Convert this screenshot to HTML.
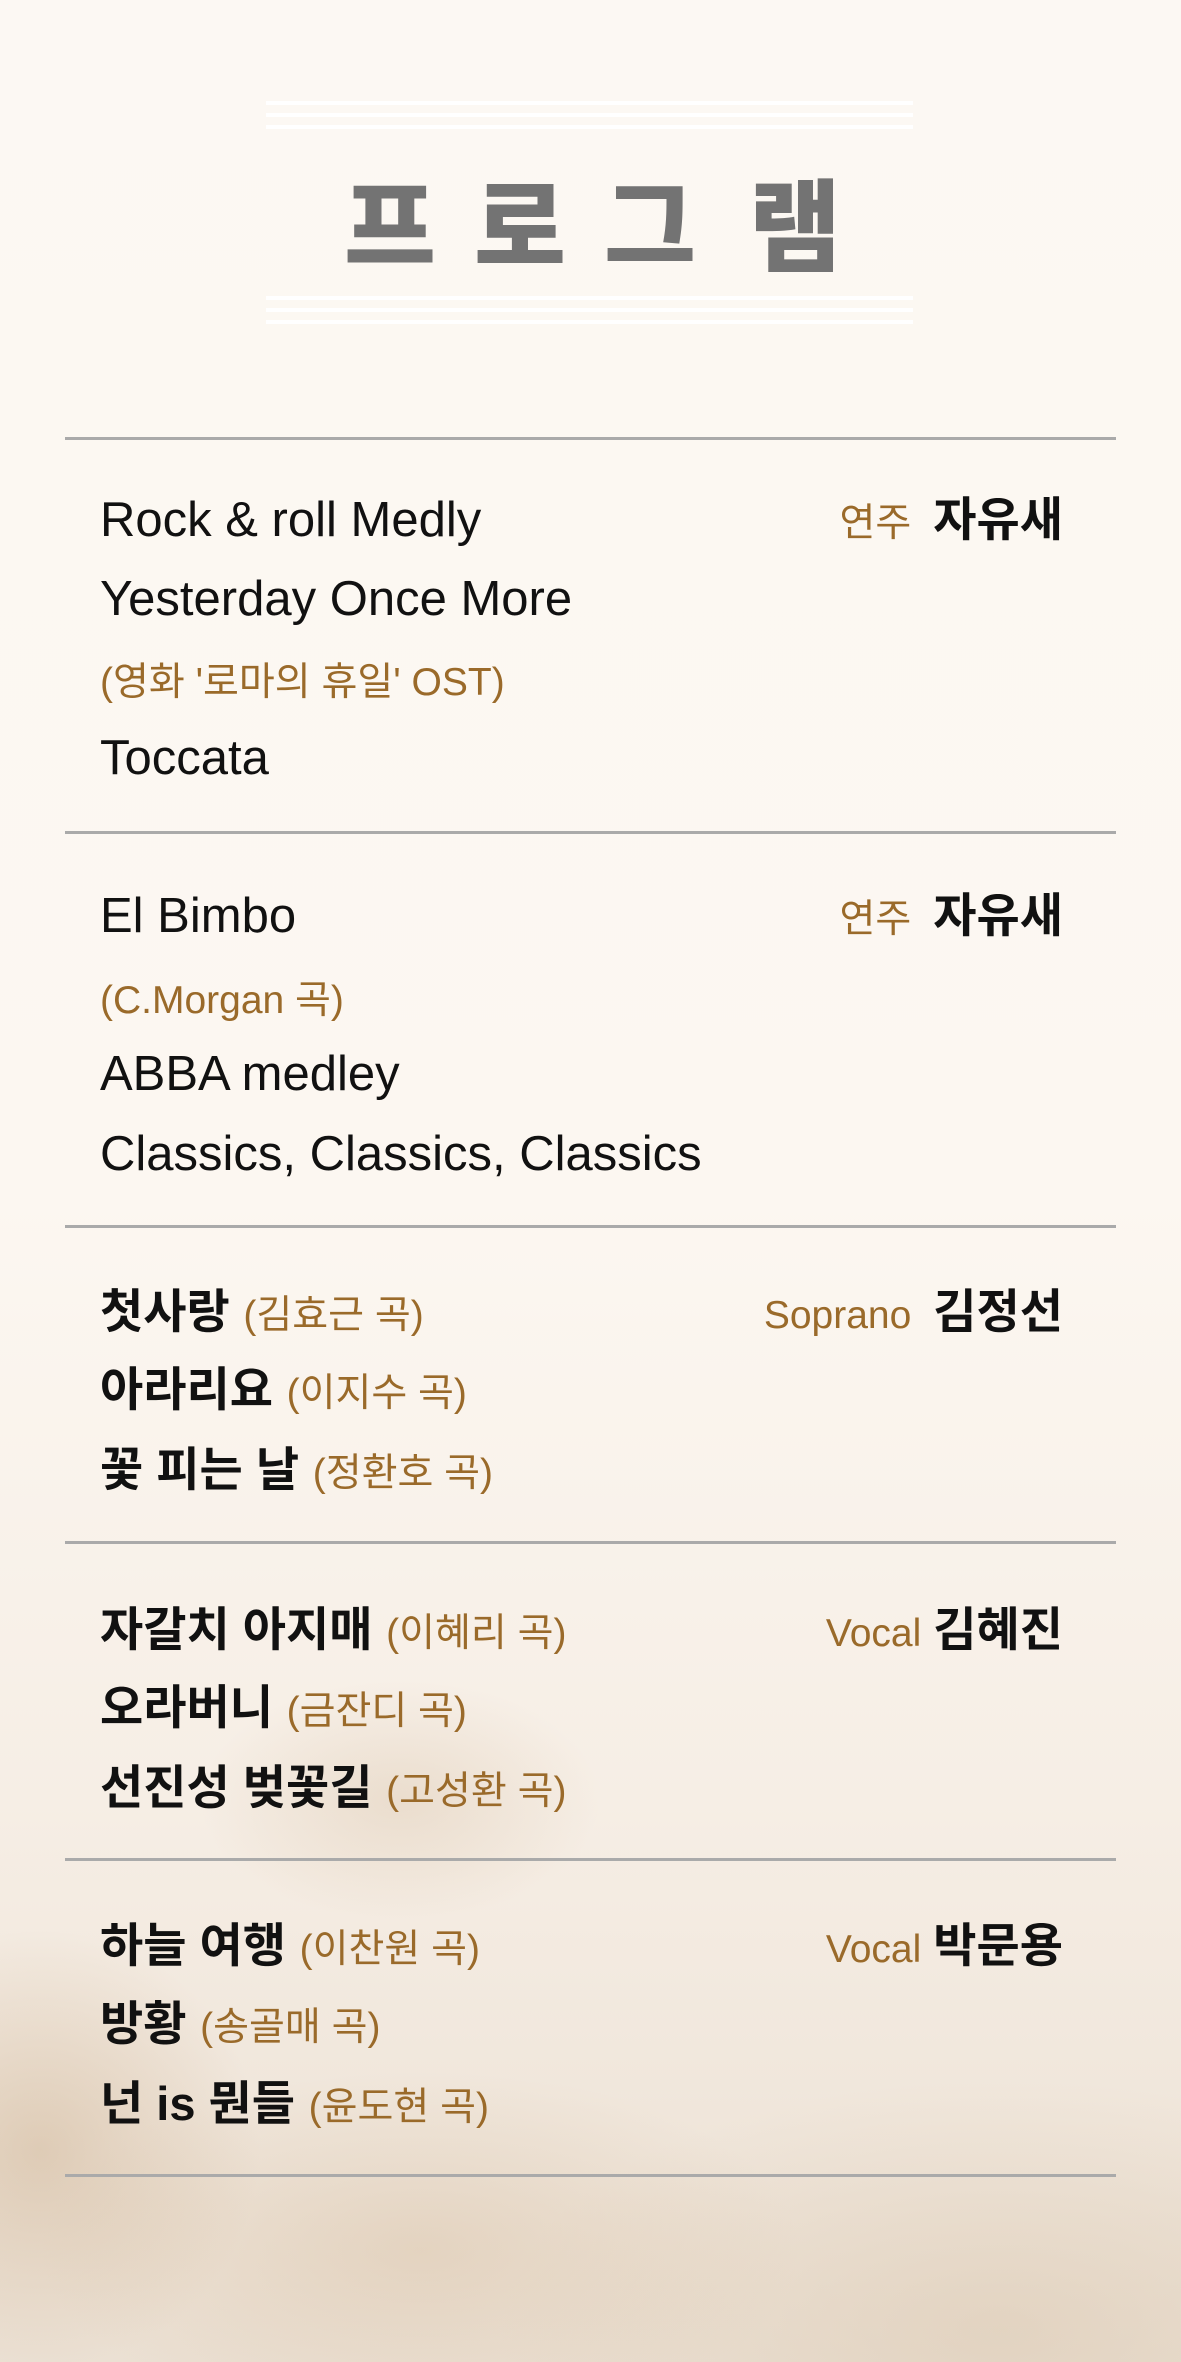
<!DOCTYPE html>
<html><head><meta charset="utf-8"><style>
html,body{margin:0;padding:0}
body{width:1181px;height:2362px;position:relative;overflow:hidden;
background:
radial-gradient(ellipse 200px 120px at 400px 1800px, rgba(200,170,135,.25), rgba(200,170,135,0) 100%),
radial-gradient(ellipse 220px 220px at 40px 2150px, rgba(190,155,115,.35), rgba(190,155,115,0) 100%),
radial-gradient(ellipse 380px 180px at 420px 2250px, rgba(205,175,140,.3), rgba(205,175,140,0) 100%),
radial-gradient(ellipse 500px 250px at 1000px 2330px, rgba(215,195,170,.45), rgba(215,195,170,0) 100%),
linear-gradient(#fcf8f3 0px,#fcf7f1 1200px,#f6eee5 1800px,#ebe0d3 2362px);
font-family:"Liberation Sans","Noto Sans CJK KR",sans-serif;}
.wl{position:absolute;left:266px;width:647px;height:4px;background:#fff}
.ch{position:absolute;top:160px;width:120px;text-align:center;font-family:"Noto Sans CJK KR",sans-serif;font-weight:900;font-size:100px;line-height:120px;color:#737373}
.hr{position:absolute;left:65px;width:1051px;height:3px;background:#aaa}
.t{position:absolute;left:100px;height:60px;line-height:60px;font-size:49px;color:#111;white-space:nowrap}
.k{font-family:"Liberation Sans","Noto Sans CJK KR",sans-serif;font-weight:700;font-size:47px}
.b{color:#9a6a2a;font-size:39px;font-weight:400}
.r{position:absolute;right:118px;height:60px;line-height:60px;white-space:nowrap;font-size:47px;color:#111;font-weight:700}
.r .b{margin-right:22px}
</style></head><body>
<div class="wl" style="top:101px"></div>
<div class="wl" style="top:113px"></div>
<div class="wl" style="top:125px"></div>
<div class="wl" style="top:296px"></div>
<div class="wl" style="top:308px"></div>
<div class="wl" style="top:320px"></div>
<div class="ch" style="left:330px">프</div>
<div class="ch" style="left:460px">로</div>
<div class="ch" style="left:590px">그</div>
<div class="ch" style="left:735px">램</div>

<div class="hr" style="top:437px"></div>
<div class="t" style="top:490px">Rock &amp; roll Medly</div>
<div class="t" style="top:569px">Yesterday Once More</div>
<div class="t" style="top:649px"><span class="b">(영화 '로마의 휴일' OST)</span></div>
<div class="t" style="top:728px">Toccata</div>
<div class="r" style="top:490px"><span class="b">연주</span>자유새</div>

<div class="hr" style="top:831px"></div>
<div class="t" style="top:886px">El Bimbo</div>
<div class="t" style="top:967px"><span class="b">(C.Morgan 곡)</span></div>
<div class="t" style="top:1044px">ABBA medley</div>
<div class="t" style="top:1124px">Classics, Classics, Classics</div>
<div class="r" style="top:886px"><span class="b">연주</span>자유새</div>

<div class="hr" style="top:1225px"></div>
<div class="t" style="top:1282px"><span class="k">첫사랑</span> <span class="b">(김효근 곡)</span></div>
<div class="t" style="top:1360px"><span class="k">아라리요</span> <span class="b">(이지수 곡)</span></div>
<div class="t" style="top:1440px"><span class="k">꽃 피는 날</span> <span class="b">(정환호 곡)</span></div>
<div class="r" style="top:1282px"><span class="b">Soprano</span>김정선</div>

<div class="hr" style="top:1541px"></div>
<div class="t" style="top:1600px"><span class="k">자갈치 아지매</span> <span class="b">(이혜리 곡)</span></div>
<div class="t" style="top:1678px"><span class="k">오라버니</span> <span class="b">(금잔디 곡)</span></div>
<div class="t" style="top:1758px"><span class="k">선진성 벚꽃길</span> <span class="b">(고성환 곡)</span></div>
<div class="r" style="top:1600px"><span class="b" style="margin-right:12px">Vocal</span>김혜진</div>

<div class="hr" style="top:1858px"></div>
<div class="t" style="top:1916px"><span class="k">하늘 여행</span> <span class="b">(이찬원 곡)</span></div>
<div class="t" style="top:1994px"><span class="k">방황</span> <span class="b">(송골매 곡)</span></div>
<div class="t" style="top:2074px"><span class="k">넌 is 뭔들</span> <span class="b">(윤도현 곡)</span></div>
<div class="r" style="top:1916px"><span class="b" style="margin-right:12px">Vocal</span>박문용</div>

<div class="hr" style="top:2174px"></div>
</body></html>
